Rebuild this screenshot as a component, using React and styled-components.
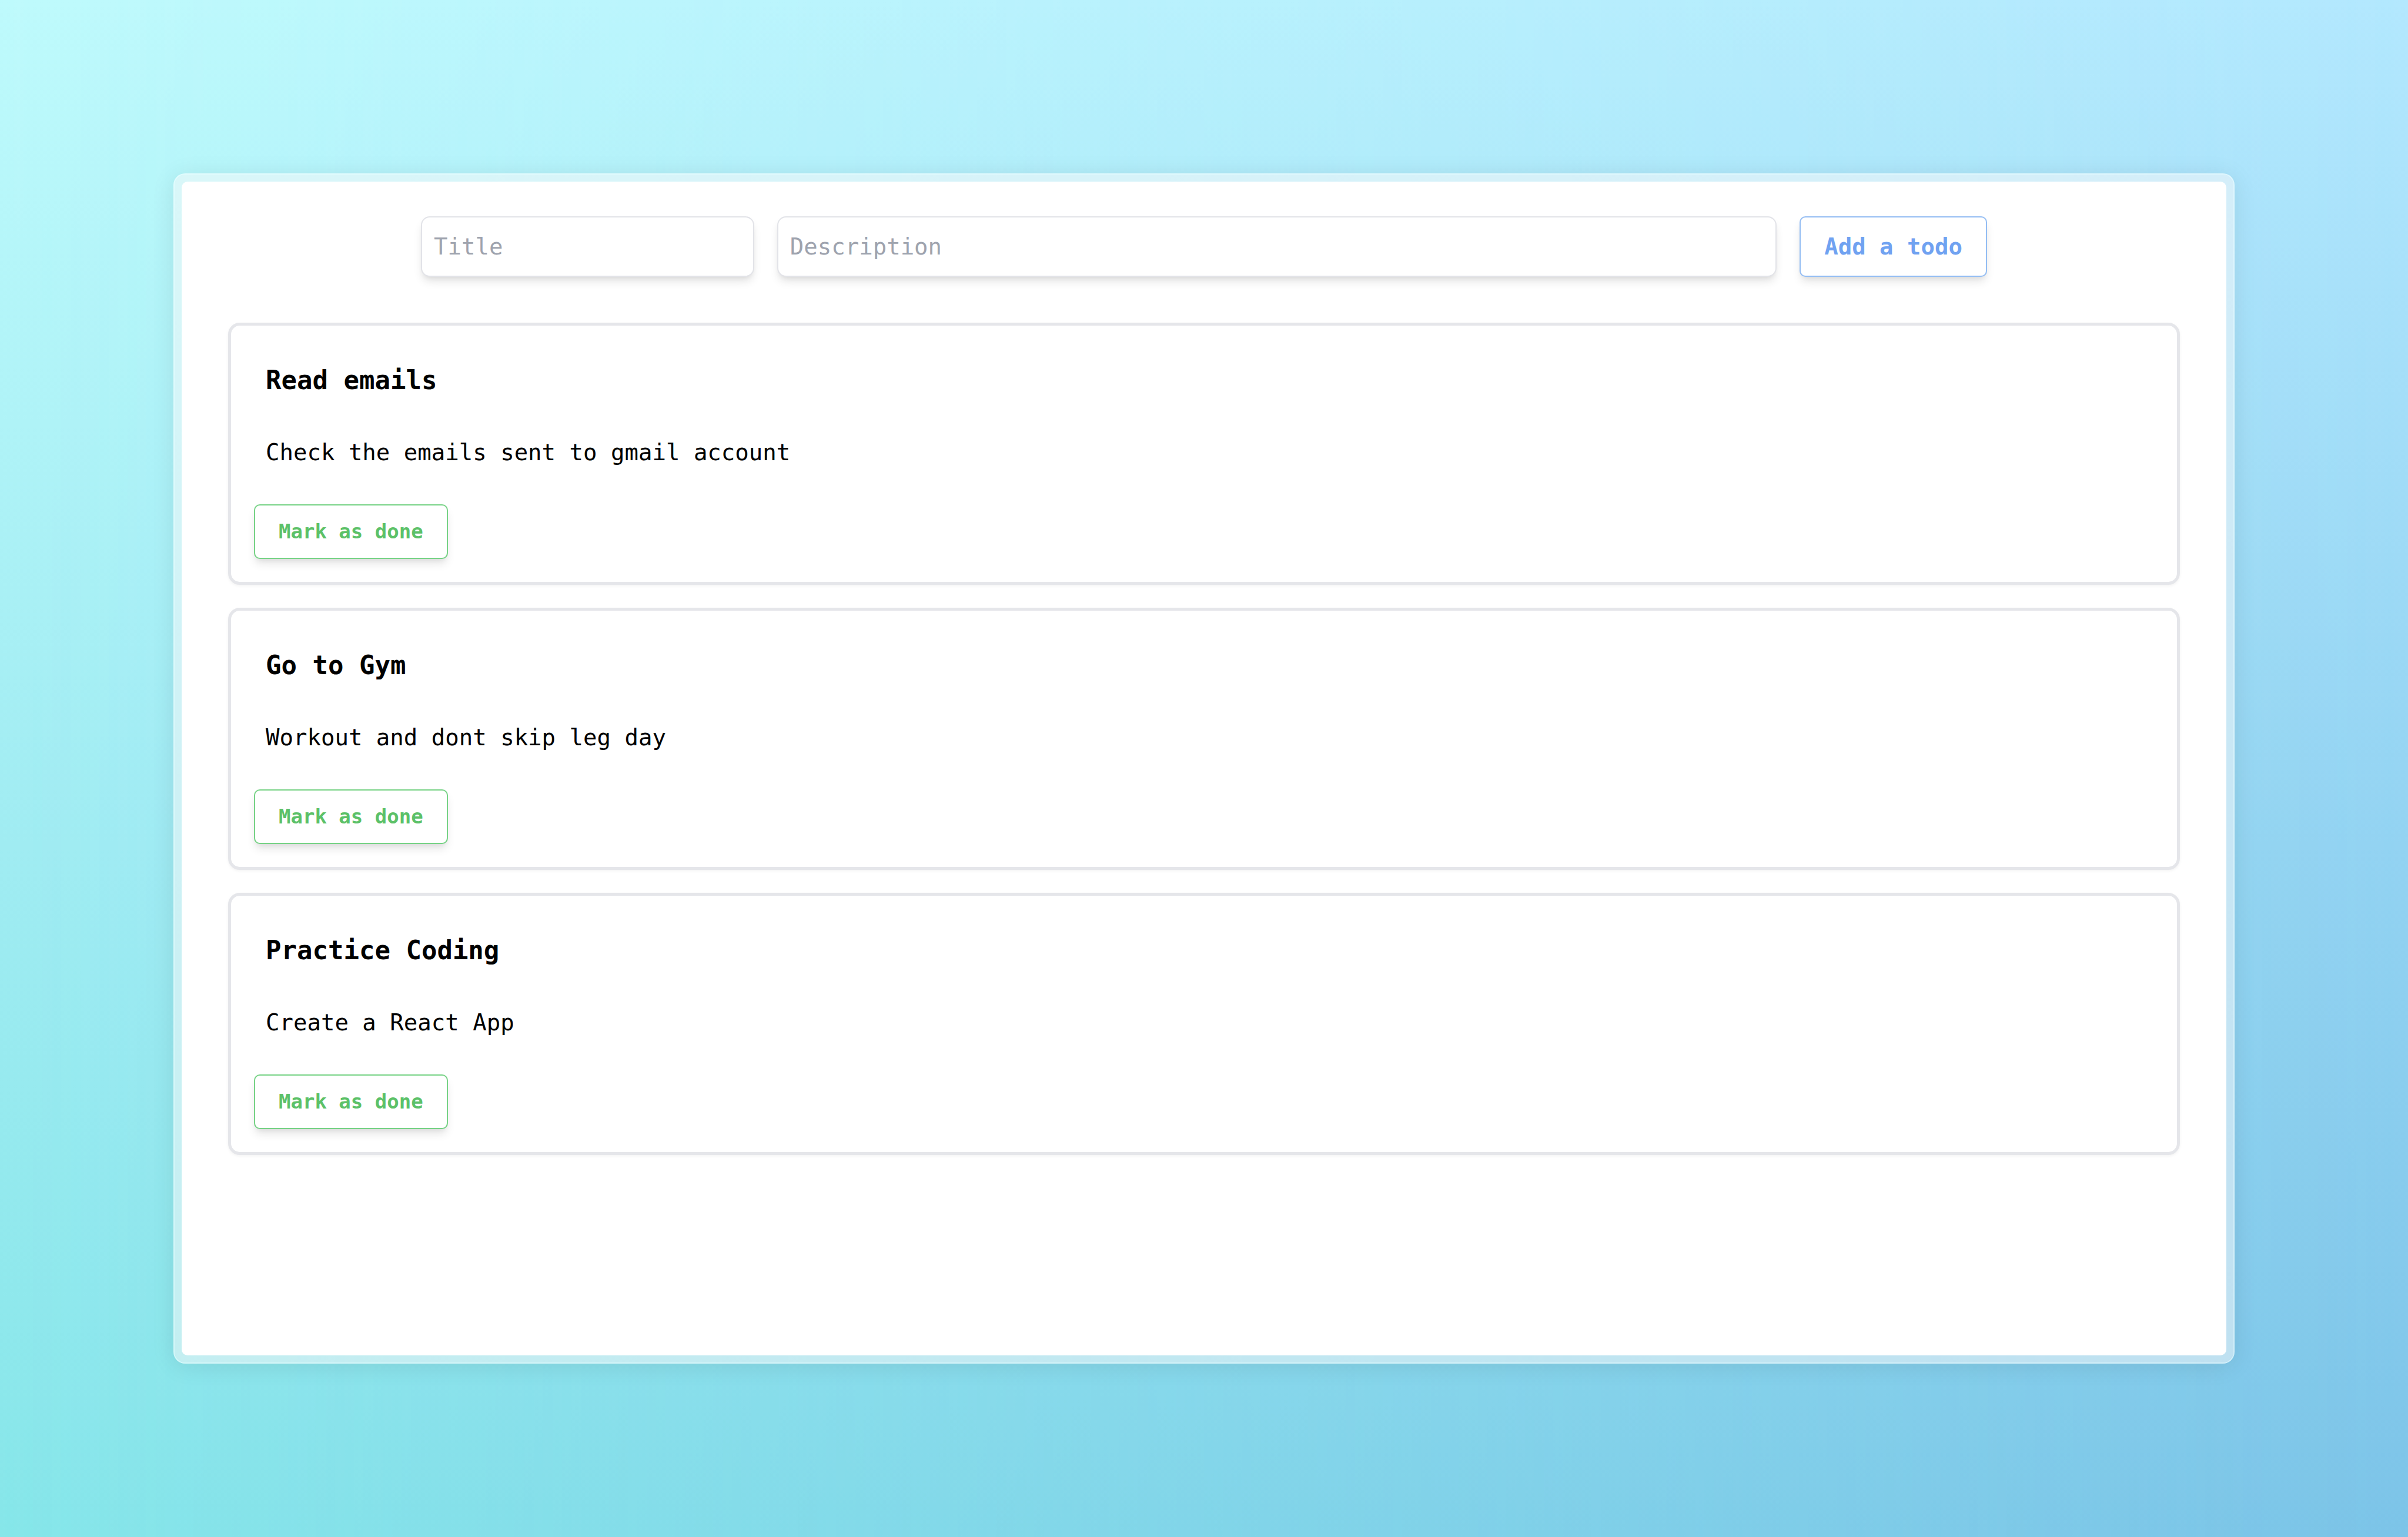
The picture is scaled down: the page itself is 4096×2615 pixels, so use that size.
import React from "react";
import styled, { createGlobalStyle } from "styled-components";

const GlobalStyle = createGlobalStyle`
  *, *::before, *::after { box-sizing: border-box; }
  body { margin: 0; }
  button, input { font: inherit; }
`;

const Page = styled.main`
  position: relative;
  isolation: isolate;
  display: flex;
  min-height: 100vh;
  padding: 295px;
  font-family: "DejaVu Sans Mono", monospace;
  font-size: 39px;
  line-height: 59px;
  color: #000;
  background: linear-gradient(to bottom, #b3e8fe, #93d3f2 55%, #7cc4e8);

  /* Aqua side of the backdrop, fading out toward the blue side */
  &::before {
    content: "";
    position: absolute;
    inset: 0;
    z-index: -1;
    background: linear-gradient(to bottom, #befafc, #a0ecf2 55%, #86e6e9);
    mask-image: linear-gradient(to right, #000, transparent);
  }
`;

const Frame = styled.div`
  display: flex;
  flex: 1;
  padding: 12px;
  border: 2px solid rgba(245, 255, 255, 0.7);
  border-radius: 20px;
  background: rgba(252, 248, 248, 0.5);
  background-clip: padding-box;
  box-shadow: 0 4px 40px rgba(0, 0, 0, 0.09);
`;

const Panel = styled.section`
  display: flex;
  flex: 1;
  flex-direction: column;
  gap: 78px;
  padding: 59px 79px;
  border-radius: 10px;
  background: #fff;
`;

const TodoForm = styled.form`
  display: grid;
  grid-template-columns: 1fr 3fr auto;
  gap: 39px;
  padding: 0 328px;
`;

const softShadow = "0 10px 15px -2px rgba(0, 0, 0, 0.1), 0 5px 10px -5px rgba(0, 0, 0, 0.1)";

const TextField = styled.input`
  min-width: 0;
  height: 103px;
  padding: 20px;
  border: 2px solid #e2e3e8;
  border-radius: 15px;
  background: #fff;
  box-shadow: ${softShadow};

  &::placeholder {
    color: #9ea3ae;
    opacity: 1;
  }
`;

const Button = styled.button`
  padding: 20px 40px;
  border: 2px solid ${(p) => p.$border};
  border-radius: 10px;
  background: #fff;
  color: ${(p) => p.$color};
  font-weight: 700;
  box-shadow: ${softShadow};
  cursor: pointer;
`;

const AddButton = styled(Button).attrs({ $border: "#94bdf3", $color: "#70a2f1" })``;

const DoneButton = styled(Button).attrs({ $border: "#76d285", $color: "#5cc168" })`
  align-self: flex-start;
  margin-top: 20px;
  font-size: 34px;
  line-height: 49px;
`;

const TodoList = styled.ul`
  display: flex;
  flex-direction: column;
  gap: 39px;
  margin: 0;
  padding: 0;
  list-style: none;
`;

const TodoCard = styled.li`
  display: flex;
  flex-direction: column;
  padding: 39px;
  border: 5px solid #e5e6ea;
  border-radius: 20px;
  background: #fff;
  box-shadow: 0 2px 5px rgba(0, 0, 0, 0.05);
`;

const TodoTitle = styled.h2`
  margin: 0;
  padding: 20px;
  font-size: 44px;
  line-height: 68px;
`;

const TodoText = styled.p`
  margin: 0;
  padding: 39px 20px;
`;

const todos = [
  { title: "Read emails", text: "Check the emails sent to gmail account" },
  { title: "Go to Gym", text: "Workout and dont skip leg day" },
  { title: "Practice Coding", text: "Create a React App" },
];

export default function App() {
  return (
    <>
      <GlobalStyle />
      <Page>
        <Frame>
          <Panel>
            <TodoForm onSubmit={(e) => e.preventDefault()}>
              <TextField type="text" placeholder="Title" aria-label="Title" />
              <TextField type="text" placeholder="Description" aria-label="Description" />
              <AddButton type="submit">Add a todo</AddButton>
            </TodoForm>
            <TodoList>
              {todos.map((todo) => (
                <TodoCard key={todo.title}>
                  <TodoTitle>{todo.title}</TodoTitle>
                  <TodoText>{todo.text}</TodoText>
                  <DoneButton type="button">Mark as done</DoneButton>
                </TodoCard>
              ))}
            </TodoList>
          </Panel>
        </Frame>
      </Page>
    </>
  );
}
